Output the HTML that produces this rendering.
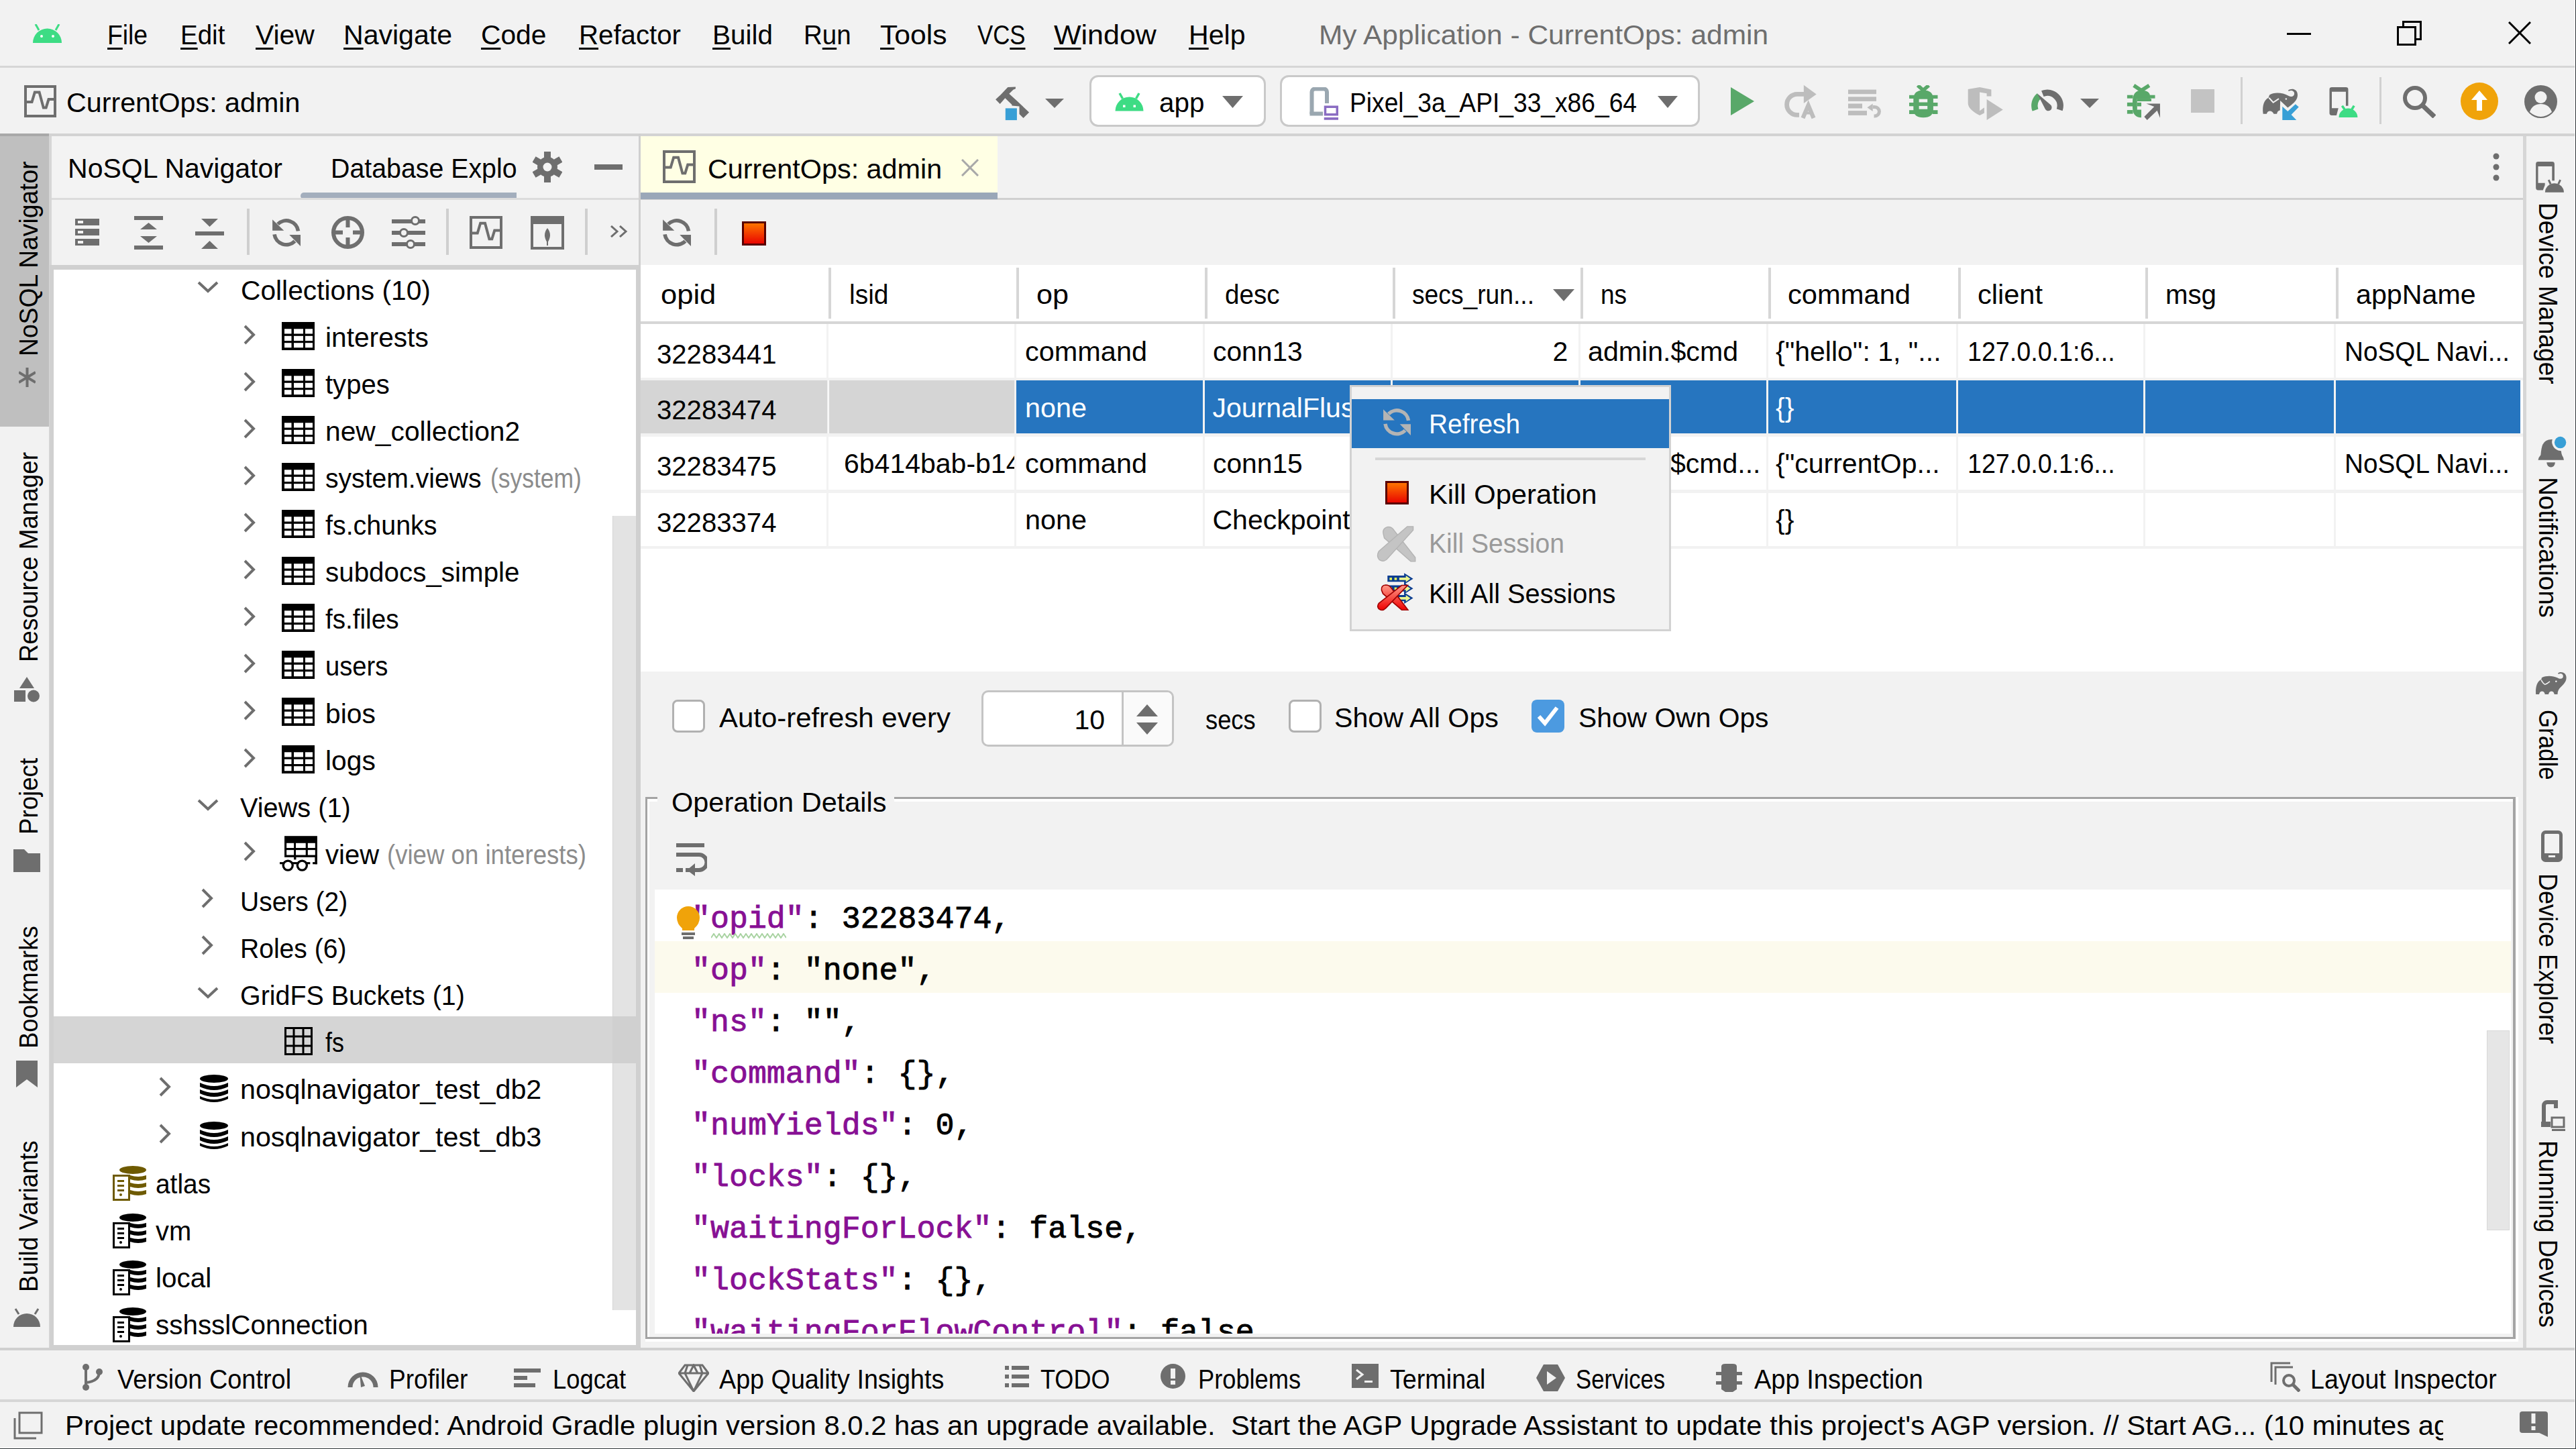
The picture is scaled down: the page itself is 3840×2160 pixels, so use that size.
<!DOCTYPE html><html><head><meta charset="utf-8"><style>
html,body{margin:0;padding:0;width:3840px;height:2160px;overflow:hidden;background:#f2f2f2;}
body>div,body>svg{position:absolute;}
div{position:absolute;box-sizing:border-box;}
.t{white-space:pre;}
.s{font-family:'Liberation Sans', sans-serif;}
.m{font-family:'Liberation Mono', monospace;-webkit-text-stroke:0.9px currentColor;}
</style></head><body>
<div style="left:0px;top:0px;width:3840px;height:98px;background:#f2f2f2;"></div>
<div style="left:0px;top:98px;width:3840px;height:3px;background:#d6d6d6;"></div>
<svg style="position:absolute;left:49px;top:36px;" width="43" height="28" viewBox="0 0 43 28"><path d="M0 28 A21.5 21.5 0 0 1 43 28 Z" fill="#3ddc84"/><line x1="9" y1="9" x2="4" y2="0" stroke="#3ddc84" stroke-width="3"/><line x1="34" y1="9" x2="39" y2="0" stroke="#3ddc84" stroke-width="3"/><circle cx="13" cy="18" r="2" fill="#fff"/><circle cx="30" cy="18" r="2" fill="#fff"/></svg>
<div class="t s" style="left:160.0px;top:32.1px;font-size:41px;line-height:41px;color:#000;transform:scaleX(0.9090);transform-origin:0 0;"><span style="text-decoration:underline;text-decoration-thickness:3px;text-underline-offset:5px">F</span>ile</div>
<div class="t s" style="left:269.0px;top:32.1px;font-size:41px;line-height:41px;color:#000;transform:scaleX(0.9388);transform-origin:0 0;"><span style="text-decoration:underline;text-decoration-thickness:3px;text-underline-offset:5px">E</span>dit</div>
<div class="t s" style="left:381.0px;top:32.1px;font-size:41px;line-height:41px;color:#000;transform:scaleX(0.9972);transform-origin:0 0;"><span style="text-decoration:underline;text-decoration-thickness:3px;text-underline-offset:5px">V</span>iew</div>
<div class="t s" style="left:512.0px;top:32.1px;font-size:41px;line-height:41px;color:#000;transform:scaleX(1.0010);transform-origin:0 0;"><span style="text-decoration:underline;text-decoration-thickness:3px;text-underline-offset:5px">N</span>avigate</div>
<div class="t s" style="left:717.0px;top:32.1px;font-size:41px;line-height:41px;color:#000;transform:scaleX(0.9940);transform-origin:0 0;"><span style="text-decoration:underline;text-decoration-thickness:3px;text-underline-offset:5px">C</span>ode</div>
<div class="t s" style="left:863.0px;top:32.1px;font-size:41px;line-height:41px;color:#000;transform:scaleX(0.9808);transform-origin:0 0;"><span style="text-decoration:underline;text-decoration-thickness:3px;text-underline-offset:5px">R</span>efactor</div>
<div class="t s" style="left:1062.0px;top:32.1px;font-size:41px;line-height:41px;color:#000;transform:scaleX(0.9866);transform-origin:0 0;"><span style="text-decoration:underline;text-decoration-thickness:3px;text-underline-offset:5px">B</span>uild</div>
<div class="t s" style="left:1198.0px;top:32.1px;font-size:41px;line-height:41px;color:#000;transform:scaleX(0.9384);transform-origin:0 0;">R<span style="text-decoration:underline;text-decoration-thickness:3px;text-underline-offset:5px">u</span>n</div>
<div class="t s" style="left:1312.0px;top:32.1px;font-size:41px;line-height:41px;color:#000;transform:scaleX(1.0414);transform-origin:0 0;"><span style="text-decoration:underline;text-decoration-thickness:3px;text-underline-offset:5px">T</span>ools</div>
<div class="t s" style="left:1457.0px;top:32.1px;font-size:41px;line-height:41px;color:#000;transform:scaleX(0.8474);transform-origin:0 0;">VC<span style="text-decoration:underline;text-decoration-thickness:3px;text-underline-offset:5px">S</span></div>
<div class="t s" style="left:1571.0px;top:32.1px;font-size:41px;line-height:41px;color:#000;transform:scaleX(1.0482);transform-origin:0 0;"><span style="text-decoration:underline;text-decoration-thickness:3px;text-underline-offset:5px">W</span>indow</div>
<div class="t s" style="left:1772.0px;top:32.1px;font-size:41px;line-height:41px;color:#000;transform:scaleX(1.0017);transform-origin:0 0;"><span style="text-decoration:underline;text-decoration-thickness:3px;text-underline-offset:5px">H</span>elp</div>
<div class="t s" style="left:1965.5px;top:32.1px;font-size:41px;line-height:41px;color:#6e6e6e;transform:scaleX(1.0354);transform-origin:0 0;">My Application - CurrentOps: admin</div>
<div style="left:3409px;top:49px;width:36px;height:3px;background:#000;"></div>
<svg style="position:absolute;left:3573px;top:31px;" width="37" height="37" viewBox="0 0 37 37"><rect x="1.5" y="9.5" width="26" height="26" fill="none" stroke="#000" stroke-width="3"/><path d="M9.5 9.5 V1.5 H35.5 V27.5 H27.5" fill="none" stroke="#000" stroke-width="3"/></svg>
<svg style="position:absolute;left:3739px;top:32px;" width="34" height="34" viewBox="0 0 34 34"><path d="M1 1 L33 33 M33 1 L1 33" stroke="#000" stroke-width="3"/></svg>
<div style="left:0px;top:199px;width:3840px;height:4px;background:#d3d3d3;"></div>
<svg style="position:absolute;left:36px;top:127px;" width="48" height="48" viewBox="0 0 48 48"><rect x="2" y="2" width="44" height="44" fill="none" stroke="#6e6e6e" stroke-width="4"/><path d="M4 24.96 H11.52 L15.84 10.56 H22.56 L28.799999999999997 33.599999999999994 H32.64 L36.480000000000004 21.12 H44" fill="none" stroke="#6e6e6e" stroke-width="4"/></svg>
<div class="t s" style="left:99.0px;top:133.2px;font-size:41px;line-height:41px;color:#000;transform:scaleX(1.0059);transform-origin:0 0;">CurrentOps: admin</div>
<svg style="position:absolute;left:1483px;top:128px;" width="52" height="52" viewBox="0 0 52 52"><path d="M1.1 20.3 L8.7 13.2 L19.3 2.1 L30.9 1.6 L30.9 4.2 L27.4 5.7 L21.3 11.7 L33.4 22.8 L51.1 39.5 L42.5 48.1 L36.5 42 L36.5 30.4 L25.4 29.4 L25.4 27.9 L15.3 18.3 L7.7 26.9 Z" fill="#6e6e6e"/><rect x="14.3" y="31.9" width="20.1" height="20.7" fill="#f2f2f2"/><rect x="15.8" y="33.4" width="17.1" height="17.7" fill="#389fd6"/></svg>
<svg style="position:absolute;left:1558px;top:147px;" width="28" height="14" viewBox="0 0 28 14"><path d="M0 0 H28 L14 14 Z" fill="#6e6e6e"/></svg>
<div style="left:1624px;top:112px;width:263px;height:77px;background:#fff;border:3px solid #c9c9c9;border-radius:13px"></div>
<svg style="position:absolute;left:1662px;top:137px;" width="43" height="29" viewBox="0 0 43 29"><path d="M0.5 28.5 A21 21 0 0 1 42.5 28.5 Z" fill="#3ddc84"/><line x1="11.5" y1="10" x2="7" y2="2" stroke="#3ddc84" stroke-width="3.5"/><line x1="31.5" y1="10" x2="36" y2="2" stroke="#3ddc84" stroke-width="3.5"/><rect x="12" y="19.5" width="3.5" height="3.5" fill="#fff"/><rect x="27.5" y="19.5" width="3.5" height="3.5" fill="#fff"/></svg>
<div class="t s" style="left:1727.5px;top:132.7px;font-size:41px;line-height:41px;color:#000;transform:scaleX(0.9858);transform-origin:0 0;">app</div>
<svg style="position:absolute;left:1822px;top:143px;" width="31" height="18" viewBox="0 0 31 18"><path d="M0 0 H31 L15.5 18 Z" fill="#6e6e6e"/></svg>
<div style="left:1908px;top:112px;width:626px;height:77px;background:#fff;border:3px solid #c9c9c9;border-radius:13px"></div>
<svg style="position:absolute;left:1952px;top:130px;" width="44" height="49" viewBox="0 0 44 49"><path d="M3.5 40 V7 a4.5 4.5 0 0 1 4.5 -4.5 H21.5 a4.5 4.5 0 0 1 4.5 4.5 V24" fill="none" stroke="#9aa7b0" stroke-width="6"/><rect x="0.5" y="36.5" width="19.5" height="6" fill="#9aa7b0"/><rect x="23.5" y="29.25" width="17.75" height="11.5" fill="none" stroke="#8a6cc2" stroke-width="3.5"/><rect x="21.75" y="45" width="21.25" height="3.75" fill="#8a6cc2"/></svg>
<div class="t s" style="left:2012.0px;top:132.7px;font-size:41px;line-height:41px;color:#000;transform:scaleX(0.9070);transform-origin:0 0;">Pixel_3a_API_33_x86_64</div>
<svg style="position:absolute;left:2471px;top:143px;" width="30" height="18" viewBox="0 0 30 18"><path d="M0 0 H30 L15 18 Z" fill="#6e6e6e"/></svg>
<svg style="position:absolute;left:2580px;top:130px;" width="35" height="42" viewBox="0 0 35 42"><path d="M0 0 L35 21 L0 42 Z" fill="#59a869"/></svg>
<svg style="position:absolute;left:2658px;top:125px;" width="52" height="53" viewBox="0 0 52 53"><path d="M31 15.4 H21.1 A15.5 15.5 0 0 0 21.1 46.4 H24" fill="none" stroke="#bdbdbd" stroke-width="6.8"/><path d="M30.8 1.8 L49.7 15.4 L30.8 29 Z" fill="#bdbdbd"/><path d="M29.5 51 L37.6 32 L45.5 51" fill="none" stroke="#bdbdbd" stroke-width="6.2" stroke-linejoin="miter"/><rect x="33" y="41.5" width="9" height="4" fill="#bdbdbd"/></svg>
<svg style="position:absolute;left:2755px;top:133px;" width="50" height="44" viewBox="0 0 50 44"><rect x="0" y="0.6" width="42" height="6.6" fill="#bdbdbd"/><rect x="0" y="11.3" width="42" height="6.6" fill="#bdbdbd"/><rect x="0" y="21.5" width="21" height="7" fill="#bdbdbd"/><rect x="0" y="32.1" width="28" height="6.8" fill="#bdbdbd"/><path d="M36.7 26.5 H39.6 A6.8 6.8 0 0 1 39.6 40.1 H38.5" fill="none" stroke="#bdbdbd" stroke-width="5"/><path d="M28.4 27.3 L36.7 21.5 V33.1 Z" fill="#bdbdbd"/></svg>
<svg style="position:absolute;left:2846px;top:127px;" width="43" height="49" viewBox="0 0 43 49"><path d="M12.7 0.3 L20.9 7.6 L29.2 0.3" fill="none" stroke="#59a869" stroke-width="5.5"/><path d="M6.3 21 Q6.3 7.6 21.1 7.6 Q35.9 7.6 35.9 21 V36 Q35.9 48.3 21.1 48.3 Q6.3 48.3 6.3 36 Z" fill="#59a869"/><rect x="0" y="14.8" width="8" height="5.2" fill="#59a869"/><rect x="0" y="26" width="8" height="5.3" fill="#59a869"/><rect x="0" y="37.2" width="8" height="5.8" fill="#59a869"/><rect x="34.5" y="14.8" width="8" height="5.2" fill="#59a869"/><rect x="34.5" y="26" width="8" height="5.3" fill="#59a869"/><rect x="34.5" y="37.2" width="8" height="5.8" fill="#59a869"/><rect x="14.6" y="20.7" width="12.6" height="4.8" fill="#f2f2f2"/><rect x="14.6" y="30.9" width="12.6" height="4.8" fill="#f2f2f2"/></svg>
<svg style="position:absolute;left:2933px;top:129px;" width="54" height="51" viewBox="0 0 54 51"><path d="M0.7 4 L18.1 0.9 L35.4 4.6 V14.6 H28.6 V10.2 L18.1 8.4 V36.3 L24.9 31.3 V39.4 L18.1 43.1 Q0.7 34 0.7 25 Z" fill="#bdbdbd"/><path d="M28.6 18.9 L52.8 34.4 L28.6 50 Z" fill="#bdbdbd"/></svg>
<svg style="position:absolute;left:3025px;top:131px;" width="54" height="36" viewBox="0 0 54 36"><path d="M8.96 33.07 A19.2 19.2 0 0 1 14.66 11.79" fill="none" stroke="#59a869" stroke-width="9.4"/><path d="M19.81 8.7 A19.2 19.2 0 0 1 45.15 32.75" fill="none" stroke="#6e6e6e" stroke-width="9.4"/><rect x="0" y="34.7" width="54" height="2" fill="#f2f2f2"/><path d="M11.8 8.2 L31.5 25 A5.2 5.2 0 1 1 23.5 31 Z" fill="#6e6e6e"/></svg>
<svg style="position:absolute;left:3101px;top:147px;" width="28" height="14" viewBox="0 0 28 14"><path d="M0 0 H28 L14 14 Z" fill="#6e6e6e"/></svg>
<svg style="position:absolute;left:2920px;top:115px;" width="320" height="75" viewBox="0 0 2576 604"><g><path d="M2100 100 L2190 160 L2285 100" fill="none" stroke="#59a869" stroke-width="45"/><path d="M2085 300 Q2085 160 2190 160 Q2295 160 2295 230 L2295 258 L2140 258 L2140 390 L2190 390 L2190 485 Q2085 485 2085 360 Z" fill="#59a869"/><rect x="2020" y="215" width="70" height="40" fill="#59a869"/><rect x="2290" y="215" width="65" height="40" fill="#59a869"/><rect x="2020" y="305" width="70" height="45" fill="#59a869"/><rect x="2020" y="395" width="70" height="45" fill="#59a869"/><rect x="2140" y="258" width="170" height="32" fill="#59a869"/><rect x="2140" y="305" width="50" height="45" fill="#59a869"/><path d="M2225 475 L2345 355 L2250 318 L2415 318 L2415 490 L2380 400 L2260 515 Z" fill="#6e6e6e"/></g></svg>
<div style="left:3266px;top:133px;width:35px;height:35px;background:#c3c3c3;"></div>
<div style="left:3340px;top:115px;width:3px;height:70px;background:#d1d1d1;"></div>
<svg style="position:absolute;left:3360px;top:115px;" width="180" height="75" viewBox="0 0 2576 1073"><path d="M195 785 C170 600 220 480 310 440 L330 380 C420 320 600 320 740 400 C800 430 860 410 860 350 C860 290 790 270 740 300 L730 280 C790 230 930 240 930 380 C930 480 860 540 800 590 L720 650 L560 500 L555 710 C510 715 490 760 490 785 L420 785 C400 710 290 690 270 785 Z" fill="#6e6e6e"/><path d="M320 440 L410 540 L530 460" fill="none" stroke="#f2f2f2" stroke-width="28"/><circle cx="685" cy="465" r="18" fill="#f2f2f2"/><path d="M605 625 L720 730 L885 575 L955 635 L795 800 L905 915 L605 915 Z" fill="#389fd6"/><path d="M1610 260 Q1610 215 1660 215 H1960 Q2010 215 2010 260 V610 H1960 V310 H1660 V660 H1800 L1760 815 H1660 Q1610 815 1610 765 Z" fill="#6e6e6e"/><path d="M1810 860 A200 195 0 0 1 2210 860 Z" fill="#3ddc84"/><path d="M1880 610 L1935 690 M2135 610 L2085 690" stroke="#3ddc84" stroke-width="50"/></svg>
<div style="left:3547px;top:115px;width:3px;height:70px;background:#d1d1d1;"></div>
<svg style="position:absolute;left:3581px;top:127px;" width="50" height="49" viewBox="0 0 50 49"><circle cx="19" cy="19" r="15" fill="none" stroke="#6e6e6e" stroke-width="6"/><path d="M30 30 L48 47" stroke="#6e6e6e" stroke-width="7"/></svg>
<svg style="position:absolute;left:3668px;top:123px;" width="56" height="56" viewBox="0 0 56 56"><circle cx="28" cy="28" r="28" fill="#f0a30a"/><path d="M28 12 L40 26 H32 V42 H24 V26 H16 Z" fill="#fff"/></svg>
<svg style="position:absolute;left:3763px;top:127px;" width="49" height="49" viewBox="0 0 49 49"><circle cx="24.5" cy="24.5" r="24.5" fill="#6e6e6e"/><circle cx="24.5" cy="18" r="9" fill="#f2f2f2"/><path d="M8 40 Q12 28 24.5 28 Q37 28 41 40 Q33 47 24.5 47 Q16 47 8 40 Z" fill="#f2f2f2"/></svg>
<div style="left:0px;top:203px;width:73px;height:1808px;background:#f2f2f2;"></div>
<div style="left:0px;top:199px;width:73px;height:437px;background:#bfbfbf;"></div>
<div style="left:0px;top:199px;width:73px;height:4px;background:#a9a9a9;"></div>
<div style="left:73px;top:203px;width:4px;height:1808px;background:#d6d6d6;"></div>
<div class="t s" style="left:23.6px;top:530.6px;font-size:38px;line-height:38px;color:#000;transform-origin:0 0;transform:rotate(-90deg) scaleX(0.9804)">NoSQL Navigator</div>
<svg style="position:absolute;left:28px;top:544px;" width="25" height="37" viewBox="0 0 25 37"><path d="M12.5 4 V33 M0 11 L25 26 M25 11 L0 26" stroke="#6e6e6e" stroke-width="4"/></svg>
<div class="t s" style="left:23.6px;top:987.0px;font-size:38px;line-height:38px;color:#000;transform-origin:0 0;transform:rotate(-90deg) scaleX(0.9685)">Resource Manager</div>
<svg style="position:absolute;left:20px;top:1009px;" width="40" height="38" viewBox="0 0 40 38"><path d="M20 0 L31 17 H9 Z" fill="#6e6e6e"/><rect x="1" y="20" width="17" height="17" fill="#6e6e6e"/><circle cx="30" cy="28.5" r="9" fill="#6e6e6e"/></svg>
<div class="t s" style="left:23.6px;top:1244.0px;font-size:38px;line-height:38px;color:#000;transform-origin:0 0;transform:rotate(-90deg) scaleX(0.9646)">Project</div>
<svg style="position:absolute;left:20px;top:1266px;" width="40" height="34" viewBox="0 0 40 34"><path d="M0 0 H16 L22 6 H40 V34 H0 Z" fill="#6e6e6e"/></svg>
<div class="t s" style="left:23.6px;top:1562.7px;font-size:38px;line-height:38px;color:#000;transform-origin:0 0;transform:rotate(-90deg) scaleX(0.9616)">Bookmarks</div>
<svg style="position:absolute;left:24px;top:1581px;" width="32" height="40" viewBox="0 0 32 40"><path d="M0 0 H32 V40 L16 28 L0 40 Z" fill="#6e6e6e"/></svg>
<div class="t s" style="left:23.6px;top:1925.6px;font-size:38px;line-height:38px;color:#000;transform-origin:0 0;transform:rotate(-90deg) scaleX(0.9741)">Build Variants</div>
<svg style="position:absolute;left:20px;top:1950px;" width="40" height="28" viewBox="0 0 40 28"><path d="M0 28 A20 20 0 0 1 40 28 Z" fill="#6e6e6e"/><line x1="8" y1="9" x2="3" y2="1" stroke="#6e6e6e" stroke-width="3"/><line x1="32" y1="9" x2="37" y2="1" stroke="#6e6e6e" stroke-width="3"/></svg>
<div style="left:77px;top:203px;width:878px;height:92px;background:#f3f3f3;"></div>
<div class="t s" style="left:101.0px;top:231.2px;font-size:41px;line-height:41px;color:#000;transform:scaleX(1.0006);transform-origin:0 0;">NoSQL Navigator</div>
<div class="t s" style="left:492.5px;top:231.2px;font-size:41px;line-height:41px;color:#000;transform:scaleX(0.9587);transform-origin:0 0;">Database Explo</div>
<div style="left:448px;top:287px;width:322px;height:10px;background:#a3aebd;border-radius:5px 0 0 5px"></div>
<div style="left:77px;top:295px;width:878px;height:3px;background:#dcdcdc;"></div>
<svg style="position:absolute;left:794px;top:226px;" width="44" height="46" viewBox="0 0 44 46"><g transform="translate(22,23)"><circle r="15" fill="#6e6e6e"/><g fill="#6e6e6e"><rect x="-5" y="-23" width="10" height="10" transform="rotate(0)"/><rect x="-5" y="-23" width="10" height="10" transform="rotate(60)"/><rect x="-5" y="-23" width="10" height="10" transform="rotate(120)"/><rect x="-5" y="-23" width="10" height="10" transform="rotate(180)"/><rect x="-5" y="-23" width="10" height="10" transform="rotate(240)"/><rect x="-5" y="-23" width="10" height="10" transform="rotate(300)"/></g><circle r="6.5" fill="#f3f3f3"/></g></svg>
<div style="left:886px;top:245px;width:42px;height:8px;background:#6e6e6e;"></div>
<div style="left:77px;top:298px;width:878px;height:97px;background:#f2f2f2;"></div>
<svg style="position:absolute;left:112px;top:326px;" width="36" height="41" viewBox="0 0 36 41"><rect x="0" y="0" width="36" height="10" fill="#6e6e6e"/><rect x="0" y="15" width="36" height="10" fill="#6e6e6e"/><rect x="0" y="30" width="36" height="10" fill="#6e6e6e"/><rect x="4" y="3" width="8" height="4" fill="#f2f2f2"/><rect x="4" y="18" width="8" height="4" fill="#f2f2f2"/><rect x="4" y="33" width="8" height="4" fill="#f2f2f2"/></svg>
<svg style="position:absolute;left:200px;top:322px;" width="43" height="50" viewBox="0 0 43 50"><rect x="0" y="0" width="43" height="6" fill="#6e6e6e"/><rect x="0" y="44" width="43" height="6" fill="#6e6e6e"/><path d="M9 20 L21.5 10 L34 20 Z M9 30 L21.5 40 L34 30 Z" fill="#6e6e6e"/></svg>
<svg style="position:absolute;left:291px;top:326px;" width="43" height="45" viewBox="0 0 43 45"><rect x="0" y="19" width="43" height="6" fill="#6e6e6e"/><path d="M9 0 H34 L21.5 12 Z M9 45 H34 L21.5 33 Z" fill="#6e6e6e"/></svg>
<div style="left:368px;top:311px;width:4px;height:69px;background:#cfcfcf;"></div>
<svg style="position:absolute;left:405px;top:326px;" width="43" height="43" viewBox="0 0 43 43"><g transform="scale(1.0)"><path d="M9.14 8.14 A17.9 17.9 0 0 1 39.5 18.3" fill="none" stroke="#6e6e6e" stroke-width="5.6"/><path d="M4.07 23.3 A17.9 17.9 0 0 0 34.46 33.46" fill="none" stroke="#6e6e6e" stroke-width="5.6"/><path d="M1.1 1.2 V17.8 H18.3 Z" fill="#6e6e6e"/><path d="M43 23.9 V41 L26.3 23.9 Z" fill="#6e6e6e"/></g></svg>
<svg style="position:absolute;left:494px;top:322px;" width="49" height="49" viewBox="0 0 49 49"><circle cx="24.5" cy="24.5" r="21.5" fill="none" stroke="#6e6e6e" stroke-width="6"/><path d="M24.5 3 V17 M24.5 32 V46 M3 24.5 H17 M32 24.5 H46" stroke="#6e6e6e" stroke-width="6"/></svg>
<svg style="position:absolute;left:584px;top:322px;" width="50" height="50" viewBox="0 0 50 50"><rect x="0" y="5" width="50" height="6" fill="#6e6e6e"/><rect x="0" y="22" width="50" height="6" fill="#6e6e6e"/><rect x="0" y="39" width="50" height="6" fill="#6e6e6e"/><circle cx="35" cy="7" r="5.5" fill="#f2f2f2" stroke="#6e6e6e" stroke-width="3"/><circle cx="18" cy="25" r="5.5" fill="#f2f2f2" stroke="#6e6e6e" stroke-width="3"/><circle cx="28" cy="42" r="5.5" fill="#f2f2f2" stroke="#6e6e6e" stroke-width="3"/></svg>
<div style="left:665px;top:311px;width:4px;height:69px;background:#cfcfcf;"></div>
<svg style="position:absolute;left:700px;top:322px;" width="49" height="49" viewBox="0 0 49 49"><rect x="2" y="2" width="45" height="45" fill="none" stroke="#6e6e6e" stroke-width="4"/><path d="M4 25.48 H11.76 L16.17 10.78 H23.029999999999998 L29.4 34.3 H33.32 L37.24 21.56 H45" fill="none" stroke="#6e6e6e" stroke-width="4"/></svg>
<svg style="position:absolute;left:791px;top:322px;" width="50" height="50" viewBox="0 0 50 50"><rect x="2" y="2" width="46" height="46" fill="none" stroke="#6e6e6e" stroke-width="4"/><rect x="2" y="2" width="46" height="10" fill="#6e6e6e"/><path d="M25 18 Q33 28 25 40 Q17 28 25 18 Z" fill="#6e6e6e"/><line x1="25" y1="38" x2="25" y2="44" stroke="#6e6e6e" stroke-width="2"/></svg>
<div style="left:872px;top:311px;width:4px;height:69px;background:#cfcfcf;"></div>
<svg style="position:absolute;left:910px;top:336px;" width="26" height="18" viewBox="0 0 26 18"><path d="M1 1 L10 9 L1 17 M14 1 L23 9 L14 17" fill="none" stroke="#6e6e6e" stroke-width="3"/></svg>
<div style="left:952px;top:199px;width:3px;height:196px;background:#d0d0d0;"></div>
<div style="left:77px;top:395px;width:878px;height:7px;background:#d0d0d0;"></div>
<div style="left:80px;top:402px;width:868px;height:1609px;background:#ffffff;"></div>
<div style="left:948px;top:395px;width:7px;height:1616px;background:#d0d0d0;"></div>
<div style="left:74px;top:395px;width:6px;height:1610px;background:#d0d0d0;"></div>
<div style="left:913px;top:769px;width:35px;height:1184px;background:#e3e3e3;border-left:1px solid #d4d4d4"></div>
<svg style="position:absolute;left:294px;top:419px;" width="32" height="18" viewBox="0 0 32 18"><path d="M2 2 L16 15 L30 2" fill="none" stroke="#6e6e6e" stroke-width="4"/></svg>
<div class="t s" style="left:358.8px;top:412.6px;font-size:41px;line-height:41px;color:#000;transform:scaleX(0.9933);transform-origin:0 0;">Collections (10)</div>
<svg style="position:absolute;left:363px;top:483.6px;" width="18" height="30" viewBox="0 0 18 30"><path d="M2 2 L15 15 L2 28" fill="none" stroke="#6e6e6e" stroke-width="4"/></svg>
<svg style="position:absolute;left:420px;top:479.6px;" width="49" height="42" viewBox="0 0 49 42"><g transform="scale(1.000,1.000)"><rect x="0" y="0" width="49" height="42" fill="#000"/><rect x="4" y="10.3" width="10.5" height="7.199999999999999" fill="#fff"/><rect x="4" y="20.8" width="10.5" height="7.199999999999999" fill="#fff"/><rect x="4" y="31.2" width="10.5" height="7.0000000000000036" fill="#fff"/><rect x="18" y="10.3" width="14" height="7.199999999999999" fill="#fff"/><rect x="18" y="20.8" width="14" height="7.199999999999999" fill="#fff"/><rect x="18" y="31.2" width="14" height="7.0000000000000036" fill="#fff"/><rect x="35" y="10.3" width="11" height="7.199999999999999" fill="#fff"/><rect x="35" y="20.8" width="11" height="7.199999999999999" fill="#fff"/><rect x="35" y="31.2" width="11" height="7.0000000000000036" fill="#fff"/></g></svg>
<div class="t s" style="left:485.0px;top:482.8px;font-size:41px;line-height:41px;color:#000;transform:scaleX(0.9921);transform-origin:0 0;">interests</div>
<svg style="position:absolute;left:363px;top:553.7px;" width="18" height="30" viewBox="0 0 18 30"><path d="M2 2 L15 15 L2 28" fill="none" stroke="#6e6e6e" stroke-width="4"/></svg>
<svg style="position:absolute;left:420px;top:549.7px;" width="49" height="42" viewBox="0 0 49 42"><g transform="scale(1.000,1.000)"><rect x="0" y="0" width="49" height="42" fill="#000"/><rect x="4" y="10.3" width="10.5" height="7.199999999999999" fill="#fff"/><rect x="4" y="20.8" width="10.5" height="7.199999999999999" fill="#fff"/><rect x="4" y="31.2" width="10.5" height="7.0000000000000036" fill="#fff"/><rect x="18" y="10.3" width="14" height="7.199999999999999" fill="#fff"/><rect x="18" y="20.8" width="14" height="7.199999999999999" fill="#fff"/><rect x="18" y="31.2" width="14" height="7.0000000000000036" fill="#fff"/><rect x="35" y="10.3" width="11" height="7.199999999999999" fill="#fff"/><rect x="35" y="20.8" width="11" height="7.199999999999999" fill="#fff"/><rect x="35" y="31.2" width="11" height="7.0000000000000036" fill="#fff"/></g></svg>
<div class="t s" style="left:485.0px;top:552.9px;font-size:41px;line-height:41px;color:#000;transform:scaleX(0.9766);transform-origin:0 0;">types</div>
<svg style="position:absolute;left:363px;top:623.8px;" width="18" height="30" viewBox="0 0 18 30"><path d="M2 2 L15 15 L2 28" fill="none" stroke="#6e6e6e" stroke-width="4"/></svg>
<svg style="position:absolute;left:420px;top:619.8px;" width="49" height="42" viewBox="0 0 49 42"><g transform="scale(1.000,1.000)"><rect x="0" y="0" width="49" height="42" fill="#000"/><rect x="4" y="10.3" width="10.5" height="7.199999999999999" fill="#fff"/><rect x="4" y="20.8" width="10.5" height="7.199999999999999" fill="#fff"/><rect x="4" y="31.2" width="10.5" height="7.0000000000000036" fill="#fff"/><rect x="18" y="10.3" width="14" height="7.199999999999999" fill="#fff"/><rect x="18" y="20.8" width="14" height="7.199999999999999" fill="#fff"/><rect x="18" y="31.2" width="14" height="7.0000000000000036" fill="#fff"/><rect x="35" y="10.3" width="11" height="7.199999999999999" fill="#fff"/><rect x="35" y="20.8" width="11" height="7.199999999999999" fill="#fff"/><rect x="35" y="31.2" width="11" height="7.0000000000000036" fill="#fff"/></g></svg>
<div class="t s" style="left:485.0px;top:622.9px;font-size:41px;line-height:41px;color:#000;transform:scaleX(0.9948);transform-origin:0 0;">new_collection2</div>
<svg style="position:absolute;left:363px;top:693.9px;" width="18" height="30" viewBox="0 0 18 30"><path d="M2 2 L15 15 L2 28" fill="none" stroke="#6e6e6e" stroke-width="4"/></svg>
<svg style="position:absolute;left:420px;top:689.9px;" width="49" height="42" viewBox="0 0 49 42"><g transform="scale(1.000,1.000)"><rect x="0" y="0" width="49" height="42" fill="#000"/><rect x="4" y="10.3" width="10.5" height="7.199999999999999" fill="#fff"/><rect x="4" y="20.8" width="10.5" height="7.199999999999999" fill="#fff"/><rect x="4" y="31.2" width="10.5" height="7.0000000000000036" fill="#fff"/><rect x="18" y="10.3" width="14" height="7.199999999999999" fill="#fff"/><rect x="18" y="20.8" width="14" height="7.199999999999999" fill="#fff"/><rect x="18" y="31.2" width="14" height="7.0000000000000036" fill="#fff"/><rect x="35" y="10.3" width="11" height="7.199999999999999" fill="#fff"/><rect x="35" y="20.8" width="11" height="7.199999999999999" fill="#fff"/><rect x="35" y="31.2" width="11" height="7.0000000000000036" fill="#fff"/></g></svg>
<div class="t s" style="left:485.0px;top:693.0px;font-size:41px;line-height:41px;color:#000;transform:scaleX(0.9539);transform-origin:0 0;">system.views</div>
<div class="t s" style="left:730.5px;top:693.0px;font-size:41px;line-height:41px;color:#8c8c8c;transform:scaleX(0.8649);transform-origin:0 0;">(system)</div>
<svg style="position:absolute;left:363px;top:764.0px;" width="18" height="30" viewBox="0 0 18 30"><path d="M2 2 L15 15 L2 28" fill="none" stroke="#6e6e6e" stroke-width="4"/></svg>
<svg style="position:absolute;left:420px;top:760.0px;" width="49" height="42" viewBox="0 0 49 42"><g transform="scale(1.000,1.000)"><rect x="0" y="0" width="49" height="42" fill="#000"/><rect x="4" y="10.3" width="10.5" height="7.199999999999999" fill="#fff"/><rect x="4" y="20.8" width="10.5" height="7.199999999999999" fill="#fff"/><rect x="4" y="31.2" width="10.5" height="7.0000000000000036" fill="#fff"/><rect x="18" y="10.3" width="14" height="7.199999999999999" fill="#fff"/><rect x="18" y="20.8" width="14" height="7.199999999999999" fill="#fff"/><rect x="18" y="31.2" width="14" height="7.0000000000000036" fill="#fff"/><rect x="35" y="10.3" width="11" height="7.199999999999999" fill="#fff"/><rect x="35" y="20.8" width="11" height="7.199999999999999" fill="#fff"/><rect x="35" y="31.2" width="11" height="7.0000000000000036" fill="#fff"/></g></svg>
<div class="t s" style="left:485.0px;top:763.1px;font-size:41px;line-height:41px;color:#000;transform:scaleX(0.9612);transform-origin:0 0;">fs.chunks</div>
<svg style="position:absolute;left:363px;top:834.0999999999999px;" width="18" height="30" viewBox="0 0 18 30"><path d="M2 2 L15 15 L2 28" fill="none" stroke="#6e6e6e" stroke-width="4"/></svg>
<svg style="position:absolute;left:420px;top:830.0999999999999px;" width="49" height="42" viewBox="0 0 49 42"><g transform="scale(1.000,1.000)"><rect x="0" y="0" width="49" height="42" fill="#000"/><rect x="4" y="10.3" width="10.5" height="7.199999999999999" fill="#fff"/><rect x="4" y="20.8" width="10.5" height="7.199999999999999" fill="#fff"/><rect x="4" y="31.2" width="10.5" height="7.0000000000000036" fill="#fff"/><rect x="18" y="10.3" width="14" height="7.199999999999999" fill="#fff"/><rect x="18" y="20.8" width="14" height="7.199999999999999" fill="#fff"/><rect x="18" y="31.2" width="14" height="7.0000000000000036" fill="#fff"/><rect x="35" y="10.3" width="11" height="7.199999999999999" fill="#fff"/><rect x="35" y="20.8" width="11" height="7.199999999999999" fill="#fff"/><rect x="35" y="31.2" width="11" height="7.0000000000000036" fill="#fff"/></g></svg>
<div class="t s" style="left:485.0px;top:833.2px;font-size:41px;line-height:41px;color:#000;transform:scaleX(0.9848);transform-origin:0 0;">subdocs_simple</div>
<svg style="position:absolute;left:363px;top:904.1999999999999px;" width="18" height="30" viewBox="0 0 18 30"><path d="M2 2 L15 15 L2 28" fill="none" stroke="#6e6e6e" stroke-width="4"/></svg>
<svg style="position:absolute;left:420px;top:900.1999999999999px;" width="49" height="42" viewBox="0 0 49 42"><g transform="scale(1.000,1.000)"><rect x="0" y="0" width="49" height="42" fill="#000"/><rect x="4" y="10.3" width="10.5" height="7.199999999999999" fill="#fff"/><rect x="4" y="20.8" width="10.5" height="7.199999999999999" fill="#fff"/><rect x="4" y="31.2" width="10.5" height="7.0000000000000036" fill="#fff"/><rect x="18" y="10.3" width="14" height="7.199999999999999" fill="#fff"/><rect x="18" y="20.8" width="14" height="7.199999999999999" fill="#fff"/><rect x="18" y="31.2" width="14" height="7.0000000000000036" fill="#fff"/><rect x="35" y="10.3" width="11" height="7.199999999999999" fill="#fff"/><rect x="35" y="20.8" width="11" height="7.199999999999999" fill="#fff"/><rect x="35" y="31.2" width="11" height="7.0000000000000036" fill="#fff"/></g></svg>
<div class="t s" style="left:485.0px;top:903.3px;font-size:41px;line-height:41px;color:#000;transform:scaleX(0.9421);transform-origin:0 0;">fs.files</div>
<svg style="position:absolute;left:363px;top:974.3px;" width="18" height="30" viewBox="0 0 18 30"><path d="M2 2 L15 15 L2 28" fill="none" stroke="#6e6e6e" stroke-width="4"/></svg>
<svg style="position:absolute;left:420px;top:970.3px;" width="49" height="42" viewBox="0 0 49 42"><g transform="scale(1.000,1.000)"><rect x="0" y="0" width="49" height="42" fill="#000"/><rect x="4" y="10.3" width="10.5" height="7.199999999999999" fill="#fff"/><rect x="4" y="20.8" width="10.5" height="7.199999999999999" fill="#fff"/><rect x="4" y="31.2" width="10.5" height="7.0000000000000036" fill="#fff"/><rect x="18" y="10.3" width="14" height="7.199999999999999" fill="#fff"/><rect x="18" y="20.8" width="14" height="7.199999999999999" fill="#fff"/><rect x="18" y="31.2" width="14" height="7.0000000000000036" fill="#fff"/><rect x="35" y="10.3" width="11" height="7.199999999999999" fill="#fff"/><rect x="35" y="20.8" width="11" height="7.199999999999999" fill="#fff"/><rect x="35" y="31.2" width="11" height="7.0000000000000036" fill="#fff"/></g></svg>
<div class="t s" style="left:485.0px;top:973.4px;font-size:41px;line-height:41px;color:#000;transform:scaleX(0.9317);transform-origin:0 0;">users</div>
<svg style="position:absolute;left:363px;top:1044.4px;" width="18" height="30" viewBox="0 0 18 30"><path d="M2 2 L15 15 L2 28" fill="none" stroke="#6e6e6e" stroke-width="4"/></svg>
<svg style="position:absolute;left:420px;top:1040.4px;" width="49" height="42" viewBox="0 0 49 42"><g transform="scale(1.000,1.000)"><rect x="0" y="0" width="49" height="42" fill="#000"/><rect x="4" y="10.3" width="10.5" height="7.199999999999999" fill="#fff"/><rect x="4" y="20.8" width="10.5" height="7.199999999999999" fill="#fff"/><rect x="4" y="31.2" width="10.5" height="7.0000000000000036" fill="#fff"/><rect x="18" y="10.3" width="14" height="7.199999999999999" fill="#fff"/><rect x="18" y="20.8" width="14" height="7.199999999999999" fill="#fff"/><rect x="18" y="31.2" width="14" height="7.0000000000000036" fill="#fff"/><rect x="35" y="10.3" width="11" height="7.199999999999999" fill="#fff"/><rect x="35" y="20.8" width="11" height="7.199999999999999" fill="#fff"/><rect x="35" y="31.2" width="11" height="7.0000000000000036" fill="#fff"/></g></svg>
<div class="t s" style="left:485.0px;top:1043.6px;font-size:41px;line-height:41px;color:#000;transform:scaleX(0.9942);transform-origin:0 0;">bios</div>
<svg style="position:absolute;left:363px;top:1114.5px;" width="18" height="30" viewBox="0 0 18 30"><path d="M2 2 L15 15 L2 28" fill="none" stroke="#6e6e6e" stroke-width="4"/></svg>
<svg style="position:absolute;left:420px;top:1110.5px;" width="49" height="42" viewBox="0 0 49 42"><g transform="scale(1.000,1.000)"><rect x="0" y="0" width="49" height="42" fill="#000"/><rect x="4" y="10.3" width="10.5" height="7.199999999999999" fill="#fff"/><rect x="4" y="20.8" width="10.5" height="7.199999999999999" fill="#fff"/><rect x="4" y="31.2" width="10.5" height="7.0000000000000036" fill="#fff"/><rect x="18" y="10.3" width="14" height="7.199999999999999" fill="#fff"/><rect x="18" y="20.8" width="14" height="7.199999999999999" fill="#fff"/><rect x="18" y="31.2" width="14" height="7.0000000000000036" fill="#fff"/><rect x="35" y="10.3" width="11" height="7.199999999999999" fill="#fff"/><rect x="35" y="20.8" width="11" height="7.199999999999999" fill="#fff"/><rect x="35" y="31.2" width="11" height="7.0000000000000036" fill="#fff"/></g></svg>
<div class="t s" style="left:485.0px;top:1113.7px;font-size:41px;line-height:41px;color:#000;transform:scaleX(0.9942);transform-origin:0 0;">logs</div>
<svg style="position:absolute;left:294px;top:1190.6px;" width="32" height="18" viewBox="0 0 32 18"><path d="M2 2 L16 15 L30 2" fill="none" stroke="#6e6e6e" stroke-width="4"/></svg>
<div class="t s" style="left:357.8px;top:1183.8px;font-size:41px;line-height:41px;color:#000;transform:scaleX(0.9680);transform-origin:0 0;">Views (1)</div>
<svg style="position:absolute;left:363px;top:1254.1999999999998px;" width="18" height="30" viewBox="0 0 18 30"><path d="M2 2 L15 15 L2 28" fill="none" stroke="#6e6e6e" stroke-width="4"/></svg>
<svg style="position:absolute;left:405px;top:1240px;" width="80" height="60" viewBox="0 0 1932 1449"><rect x="460" y="150" width="1180" height="765" fill="#000"/><rect x="535" y="405" width="265" height="175" fill="#fff"/><rect x="535" y="655" width="265" height="180" fill="#fff"/><rect x="870" y="405" width="355" height="175" fill="#fff"/><rect x="870" y="655" width="355" height="180" fill="#fff"/><rect x="1300" y="405" width="265" height="175" fill="#fff"/><rect x="1300" y="655" width="265" height="180" fill="#fff"/><rect x="1555" y="900" width="85" height="265" fill="#000"/><rect x="1475" y="1090" width="165" height="75" fill="#000"/><rect x="290" y="1090" width="1095" height="75" fill="#000"/><rect x="800" y="900" width="80" height="100" fill="#000"/><circle cx="585" cy="1210" r="170" fill="#fff" stroke="#000" stroke-width="80"/><circle cx="1095" cy="1210" r="170" fill="#fff" stroke="#000" stroke-width="80"/></svg>
<div class="t s" style="left:484.5px;top:1253.8px;font-size:41px;line-height:41px;color:#000;transform:scaleX(0.9756);transform-origin:0 0;">view</div>
<div class="t s" style="left:577.0px;top:1253.8px;font-size:41px;line-height:41px;color:#8c8c8c;transform:scaleX(0.8927);transform-origin:0 0;">(view on interests)</div>
<svg style="position:absolute;left:300px;top:1324.3px;" width="18" height="30" viewBox="0 0 18 30"><path d="M2 2 L15 15 L2 28" fill="none" stroke="#6e6e6e" stroke-width="4"/></svg>
<div class="t s" style="left:357.8px;top:1324.0px;font-size:41px;line-height:41px;color:#000;transform:scaleX(0.9507);transform-origin:0 0;">Users (2)</div>
<svg style="position:absolute;left:300px;top:1394.3999999999999px;" width="18" height="30" viewBox="0 0 18 30"><path d="M2 2 L15 15 L2 28" fill="none" stroke="#6e6e6e" stroke-width="4"/></svg>
<div class="t s" style="left:357.8px;top:1394.0px;font-size:41px;line-height:41px;color:#000;transform:scaleX(0.9528);transform-origin:0 0;">Roles (6)</div>
<svg style="position:absolute;left:294px;top:1471.0px;" width="32" height="18" viewBox="0 0 32 18"><path d="M2 2 L16 15 L30 2" fill="none" stroke="#6e6e6e" stroke-width="4"/></svg>
<div class="t s" style="left:357.8px;top:1464.2px;font-size:41px;line-height:41px;color:#000;transform:scaleX(0.9604);transform-origin:0 0;">GridFS Buckets (1)</div>
<div style="left:80px;top:1515px;width:833px;height:70px;background:#d5d5d5;"></div>
<div style="left:913px;top:1515px;width:35px;height:70px;background:#d0d0d0;"></div>
<svg style="position:absolute;left:424px;top:1531px;" width="42" height="42" viewBox="0 0 42 42"><rect x="1.5" y="1.5" width="39" height="39" fill="none" stroke="#000" stroke-width="3"/><path d="M14 1 V41 M28 1 V41 M1 14 H41 M1 28 H41" stroke="#000" stroke-width="3"/></svg>
<div class="t s" style="left:484.5px;top:1534.2px;font-size:41px;line-height:41px;color:#000;transform:scaleX(0.8755);transform-origin:0 0;">fs</div>
<svg style="position:absolute;left:237px;top:1604.6999999999998px;" width="18" height="30" viewBox="0 0 18 30"><path d="M2 2 L15 15 L2 28" fill="none" stroke="#6e6e6e" stroke-width="4"/></svg>
<svg style="position:absolute;left:298px;top:1602.1999999999998px;" width="42" height="42" viewBox="0 0 42 42"><ellipse cx="21" cy="6" rx="21" ry="6" fill="#000"/><path d="M0 12 Q21 22 42 12 V18 Q21 28 0 18 Z" fill="#000"/><path d="M0 22 Q21 32 42 22 V28 Q21 38 0 28 Z" fill="#000"/><path d="M0 32 Q21 42 42 32 V36 Q21 46 0 36 Z" fill="#000"/></svg>
<div class="t s" style="left:357.8px;top:1604.3px;font-size:41px;line-height:41px;color:#000;transform:scaleX(1.0056);transform-origin:0 0;">nosqlnavigator_test_db2</div>
<svg style="position:absolute;left:237px;top:1674.8px;" width="18" height="30" viewBox="0 0 18 30"><path d="M2 2 L15 15 L2 28" fill="none" stroke="#6e6e6e" stroke-width="4"/></svg>
<svg style="position:absolute;left:298px;top:1672.3px;" width="42" height="42" viewBox="0 0 42 42"><ellipse cx="21" cy="6" rx="21" ry="6" fill="#000"/><path d="M0 12 Q21 22 42 12 V18 Q21 28 0 18 Z" fill="#000"/><path d="M0 22 Q21 32 42 22 V28 Q21 38 0 28 Z" fill="#000"/><path d="M0 32 Q21 42 42 32 V36 Q21 46 0 36 Z" fill="#000"/></svg>
<div class="t s" style="left:357.8px;top:1674.5px;font-size:41px;line-height:41px;color:#000;transform:scaleX(1.0056);transform-origin:0 0;">nosqlnavigator_test_db3</div>
<svg style="position:absolute;left:168px;top:1738.3999999999999px;" width="50" height="52" viewBox="0 0 50 52"><ellipse cx="30" cy="6" rx="20" ry="6" fill="#6e5a00"/><path d="M26 14 Q38 18 50 14 V20 Q38 24 26 20 Z M26 25 Q38 29 50 25 V31 Q38 35 26 31 Z M26 36 Q38 40 50 36 V42 Q38 46 26 42 Z" fill="#6e5a00"/><rect x="1.5" y="14.5" width="23" height="36" fill="#fff" stroke="#6e5a00" stroke-width="3"/><rect x="7" y="21" width="10" height="3" fill="#6e5a00"/><rect x="7" y="28" width="10" height="3" fill="#6e5a00"/><rect x="7" y="35" width="10" height="3" fill="#6e5a00"/><circle cx="12" cy="43" r="2" fill="#6e5a00"/></svg>
<div class="t s" style="left:231.8px;top:1744.5px;font-size:41px;line-height:41px;color:#000;transform:scaleX(0.9479);transform-origin:0 0;">atlas</div>
<svg style="position:absolute;left:168px;top:1808.5px;" width="50" height="52" viewBox="0 0 50 52"><ellipse cx="30" cy="6" rx="20" ry="6" fill="#000"/><path d="M26 14 Q38 18 50 14 V20 Q38 24 26 20 Z M26 25 Q38 29 50 25 V31 Q38 35 26 31 Z M26 36 Q38 40 50 36 V42 Q38 46 26 42 Z" fill="#000"/><rect x="1.5" y="14.5" width="23" height="36" fill="#fff" stroke="#000" stroke-width="3"/><rect x="7" y="21" width="10" height="3" fill="#000"/><rect x="7" y="28" width="10" height="3" fill="#000"/><rect x="7" y="35" width="10" height="3" fill="#000"/><circle cx="12" cy="43" r="2" fill="#000"/></svg>
<div class="t s" style="left:231.8px;top:1814.7px;font-size:41px;line-height:41px;color:#000;transform:scaleX(0.9738);transform-origin:0 0;">vm</div>
<svg style="position:absolute;left:168px;top:1878.6px;" width="50" height="52" viewBox="0 0 50 52"><ellipse cx="30" cy="6" rx="20" ry="6" fill="#000"/><path d="M26 14 Q38 18 50 14 V20 Q38 24 26 20 Z M26 25 Q38 29 50 25 V31 Q38 35 26 31 Z M26 36 Q38 40 50 36 V42 Q38 46 26 42 Z" fill="#000"/><rect x="1.5" y="14.5" width="23" height="36" fill="#fff" stroke="#000" stroke-width="3"/><rect x="7" y="21" width="10" height="3" fill="#000"/><rect x="7" y="28" width="10" height="3" fill="#000"/><rect x="7" y="35" width="10" height="3" fill="#000"/><circle cx="12" cy="43" r="2" fill="#000"/></svg>
<div class="t s" style="left:231.8px;top:1884.8px;font-size:41px;line-height:41px;color:#000;transform:scaleX(0.9875);transform-origin:0 0;">local</div>
<svg style="position:absolute;left:168px;top:1948.6999999999998px;" width="50" height="52" viewBox="0 0 50 52"><ellipse cx="30" cy="6" rx="20" ry="6" fill="#000"/><path d="M26 14 Q38 18 50 14 V20 Q38 24 26 20 Z M26 25 Q38 29 50 25 V31 Q38 35 26 31 Z M26 36 Q38 40 50 36 V42 Q38 46 26 42 Z" fill="#000"/><rect x="1.5" y="14.5" width="23" height="36" fill="#fff" stroke="#000" stroke-width="3"/><rect x="7" y="21" width="10" height="3" fill="#000"/><rect x="7" y="28" width="10" height="3" fill="#000"/><rect x="7" y="35" width="10" height="3" fill="#000"/><circle cx="12" cy="43" r="2" fill="#000"/></svg>
<div class="t s" style="left:231.8px;top:1954.8px;font-size:41px;line-height:41px;color:#000;transform:scaleX(0.9856);transform-origin:0 0;">sshsslConnection</div>
<div style="left:74px;top:2005px;width:881px;height:8px;background:#d0d0d0;"></div>
<div style="left:955px;top:203px;width:2806px;height:92px;background:#f2f2f2;"></div>
<div style="left:955px;top:203px;width:532px;height:84px;background:#ffffe4;"></div>
<div style="left:955px;top:287px;width:532px;height:10px;background:#9aa7b8;"></div>
<div style="left:955px;top:295px;width:2806px;height:3px;background:#d0d0d0;"></div>
<div style="left:955px;top:287px;width:532px;height:10px;background:#9aa7b8;"></div>
<svg style="position:absolute;left:988px;top:224px;" width="49" height="49" viewBox="0 0 49 49"><rect x="2" y="2" width="45" height="45" fill="none" stroke="#6e6e6e" stroke-width="4"/><path d="M4 25.48 H11.76 L16.17 10.78 H23.029999999999998 L29.4 34.3 H33.32 L37.24 21.56 H45" fill="none" stroke="#6e6e6e" stroke-width="4"/></svg>
<div class="t s" style="left:1055.0px;top:231.7px;font-size:41px;line-height:41px;color:#000;transform:scaleX(1.0082);transform-origin:0 0;">CurrentOps: admin</div>
<svg style="position:absolute;left:1433px;top:237px;" width="26" height="26" viewBox="0 0 26 26"><path d="M1 1 L25 25 M25 1 L1 25" stroke="#a8a8a8" stroke-width="3"/></svg>
<svg style="position:absolute;left:3712px;top:228px;" width="18" height="42" viewBox="0 0 18 42"><circle cx="9" cy="5" r="4.5" fill="#6e6e6e"/><circle cx="9" cy="21" r="4.5" fill="#6e6e6e"/><circle cx="9" cy="37" r="4.5" fill="#6e6e6e"/></svg>
<svg style="position:absolute;left:987px;top:326px;" width="43" height="43" viewBox="0 0 43 43"><g transform="scale(1.0)"><path d="M9.14 8.14 A17.9 17.9 0 0 1 39.5 18.3" fill="none" stroke="#6e6e6e" stroke-width="5.6"/><path d="M4.07 23.3 A17.9 17.9 0 0 0 34.46 33.46" fill="none" stroke="#6e6e6e" stroke-width="5.6"/><path d="M1.1 1.2 V17.8 H18.3 Z" fill="#6e6e6e"/><path d="M43 23.9 V41 L26.3 23.9 Z" fill="#6e6e6e"/></g></svg>
<div style="left:1065px;top:311px;width:4px;height:69px;background:#cfcfcf;"></div>
<svg style="position:absolute;left:1106px;top:330px;" width="36" height="36" viewBox="0 0 36 36"><defs><linearGradient id="rg1106" x1="0" y1="0" x2="0" y2="1"><stop offset="0" stop-color="#ff7a00"/><stop offset="1" stop-color="#e80000"/></linearGradient></defs><rect x="1.5" y="1.5" width="33" height="33" fill="url(#rg1106)" stroke="#5a0000" stroke-width="3"/></svg>
<div style="left:955px;top:395px;width:2806px;height:606px;background:#ffffff;"></div>
<div style="left:1235px;top:399px;width:4px;height:76px;background:#d6d6d6;"></div>
<div style="left:1515px;top:399px;width:4px;height:76px;background:#d6d6d6;"></div>
<div style="left:1796px;top:399px;width:4px;height:76px;background:#d6d6d6;"></div>
<div style="left:2076px;top:399px;width:4px;height:76px;background:#d6d6d6;"></div>
<div style="left:2356px;top:399px;width:4px;height:76px;background:#d6d6d6;"></div>
<div style="left:2636px;top:399px;width:4px;height:76px;background:#d6d6d6;"></div>
<div style="left:2919px;top:399px;width:4px;height:76px;background:#d6d6d6;"></div>
<div style="left:3198px;top:399px;width:4px;height:76px;background:#d6d6d6;"></div>
<div style="left:3482px;top:399px;width:4px;height:76px;background:#d6d6d6;"></div>
<div class="t s" style="left:985.0px;top:419.1px;font-size:41px;line-height:41px;color:#000;transform:scaleX(1.0621);transform-origin:0 0;">opid</div>
<div class="t s" style="left:1266.0px;top:419.1px;font-size:41px;line-height:41px;color:#000;transform:scaleX(0.9512);transform-origin:0 0;">lsid</div>
<div class="t s" style="left:1545.0px;top:419.1px;font-size:41px;line-height:41px;color:#000;transform:scaleX(1.0525);transform-origin:0 0;">op</div>
<div class="t s" style="left:1826.0px;top:419.1px;font-size:41px;line-height:41px;color:#000;transform:scaleX(0.9409);transform-origin:0 0;">desc</div>
<div class="t s" style="left:2105.0px;top:419.1px;font-size:41px;line-height:41px;color:#000;transform:scaleX(0.9078);transform-origin:0 0;">secs_run...</div>
<div class="t s" style="left:2386.0px;top:419.1px;font-size:41px;line-height:41px;color:#000;transform:scaleX(0.9016);transform-origin:0 0;">ns</div>
<div class="t s" style="left:2665.0px;top:419.1px;font-size:41px;line-height:41px;color:#000;transform:scaleX(1.0167);transform-origin:0 0;">command</div>
<div class="t s" style="left:2948.0px;top:419.1px;font-size:41px;line-height:41px;color:#000;transform:scaleX(1.0132);transform-origin:0 0;">client</div>
<div class="t s" style="left:3228.0px;top:419.1px;font-size:41px;line-height:41px;color:#000;transform:scaleX(0.9808);transform-origin:0 0;">msg</div>
<div class="t s" style="left:3512.0px;top:419.1px;font-size:41px;line-height:41px;color:#000;transform:scaleX(1.0049);transform-origin:0 0;">appName</div>
<svg style="position:absolute;left:2315px;top:431px;" width="32" height="18" viewBox="0 0 32 18"><path d="M0 0 H32 L16 18 Z" fill="#6e6e6e"/></svg>
<div style="left:955px;top:479px;width:2806px;height:4px;background:#d6d6d6;"></div>
<div style="left:955px;top:483px;width:2806px;height:335px;background:#f2f2f2;"></div>
<div style="left:955px;top:483px;width:2806px;height:79.5px;background:#ffffff;"></div>
<div style="left:955px;top:567px;width:2806px;height:79.25px;background:#ffffff;"></div>
<div style="left:955px;top:650.75px;width:2806px;height:79.25px;background:#ffffff;"></div>
<div style="left:955px;top:735px;width:2806px;height:79.25px;background:#ffffff;"></div>
<div style="left:1232px;top:483px;width:3px;height:335px;background:#f2f2f2;"></div>
<div style="left:1512px;top:483px;width:3px;height:335px;background:#f2f2f2;"></div>
<div style="left:1793px;top:483px;width:3px;height:335px;background:#f2f2f2;"></div>
<div style="left:2073px;top:483px;width:3px;height:335px;background:#f2f2f2;"></div>
<div style="left:2353px;top:483px;width:3px;height:335px;background:#f2f2f2;"></div>
<div style="left:2633px;top:483px;width:3px;height:335px;background:#f2f2f2;"></div>
<div style="left:2916px;top:483px;width:3px;height:335px;background:#f2f2f2;"></div>
<div style="left:3195px;top:483px;width:3px;height:335px;background:#f2f2f2;"></div>
<div style="left:3479px;top:483px;width:3px;height:335px;background:#f2f2f2;"></div>
<div style="left:955px;top:567px;width:278px;height:79.25px;background:#d5d5d5;"></div>
<div style="left:1236px;top:567px;width:276px;height:79.25px;background:#d5d5d5;"></div>
<div style="left:1515px;top:567px;width:278px;height:79.25px;background:#2675bf;"></div>
<div style="left:1796px;top:567px;width:277px;height:79.25px;background:#2675bf;"></div>
<div style="left:2076px;top:567px;width:277px;height:79.25px;background:#2675bf;"></div>
<div style="left:2356px;top:567px;width:277px;height:79.25px;background:#2675bf;"></div>
<div style="left:2636px;top:567px;width:280px;height:79.25px;background:#2675bf;"></div>
<div style="left:2919px;top:567px;width:276px;height:79.25px;background:#2675bf;"></div>
<div style="left:3198px;top:567px;width:281px;height:79.25px;background:#2675bf;"></div>
<div style="left:3482px;top:567px;width:275px;height:79.25px;background:#2675bf;"></div>
<div class="t s" style="left:979.0px;top:507.6px;font-size:41px;line-height:41px;color:#000;transform:scaleX(0.9784);transform-origin:0 0;">32283441</div>
<div class="t s" style="left:1527.5px;top:504.1px;font-size:41px;line-height:41px;color:#000;transform:scaleX(1.0112);transform-origin:0 0;">command</div>
<div style="left:1797px;top:479px;width:276px;height:80px;overflow:hidden">
<div class="t s" style="left:10.5px;top:25.1px;font-size:41px;line-height:41px;color:#000;transform:scaleX(0.9946);transform-origin:0 0;">conn13</div>
</div>
<div class="t s" style="left:2314.6px;top:504.1px;font-size:41px;line-height:41px;color:#000;">2</div>
<div style="left:2357px;top:479px;width:276px;height:80px;overflow:hidden">
<div class="t s" style="left:10.0px;top:25.1px;font-size:41px;line-height:41px;color:#000;transform:scaleX(1.0034);transform-origin:0 0;">admin.$cmd</div>
</div>
<div style="left:2637px;top:479px;width:279px;height:80px;overflow:hidden">
<div class="t s" style="left:10.0px;top:25.1px;font-size:41px;line-height:41px;color:#000;">{&quot;hello&quot;: 1, &quot;...</div>
</div>
<div class="t s" style="left:2933.0px;top:504.1px;font-size:41px;line-height:41px;color:#000;transform:scaleX(0.9180);transform-origin:0 0;">127.0.0.1:6...</div>
<div class="t s" style="left:3495.0px;top:504.1px;font-size:41px;line-height:41px;color:#000;transform:scaleX(0.9441);transform-origin:0 0;">NoSQL Navi...</div>
<div class="t s" style="left:979.0px;top:591.1px;font-size:41px;line-height:41px;color:#000;transform:scaleX(0.9784);transform-origin:0 0;">32283474</div>
<div class="t s" style="left:1527.5px;top:587.6px;font-size:41px;line-height:41px;color:#fff;transform:scaleX(1.0085);transform-origin:0 0;">none</div>
<div style="left:1797px;top:562.5px;width:276px;height:80px;overflow:hidden">
<div class="t s" style="left:10.5px;top:25.1px;font-size:41px;line-height:41px;color:#fff;">JournalFlusher</div>
</div>
<div style="left:2637px;top:562.5px;width:279px;height:80px;overflow:hidden">
<div class="t s" style="left:10.0px;top:25.1px;font-size:41px;line-height:41px;color:#fff;">{}</div>
</div>
<div class="t s" style="left:979.0px;top:674.9px;font-size:41px;line-height:41px;color:#000;transform:scaleX(0.9784);transform-origin:0 0;">32283475</div>
<div style="left:1236px;top:646.25px;width:276px;height:80px;overflow:hidden">
<div class="t s" style="left:22.0px;top:25.1px;font-size:41px;line-height:41px;color:#000;">6b414bab-b14</div>
</div>
<div class="t s" style="left:1527.5px;top:671.4px;font-size:41px;line-height:41px;color:#000;transform:scaleX(1.0112);transform-origin:0 0;">command</div>
<div style="left:1797px;top:646.25px;width:276px;height:80px;overflow:hidden">
<div class="t s" style="left:10.5px;top:25.1px;font-size:41px;line-height:41px;color:#000;transform:scaleX(0.9946);transform-origin:0 0;">conn15</div>
</div>
<div style="left:2357px;top:646.25px;width:276px;height:80px;overflow:hidden">
<div class="t s" style="left:10.0px;top:25.1px;font-size:41px;line-height:41px;color:#000;">admin.$cmd...</div>
</div>
<div style="left:2637px;top:646.25px;width:279px;height:80px;overflow:hidden">
<div class="t s" style="left:10.0px;top:25.1px;font-size:41px;line-height:41px;color:#000;">{&quot;currentOp...</div>
</div>
<div class="t s" style="left:2933.0px;top:671.4px;font-size:41px;line-height:41px;color:#000;transform:scaleX(0.9180);transform-origin:0 0;">127.0.0.1:6...</div>
<div class="t s" style="left:3495.0px;top:671.4px;font-size:41px;line-height:41px;color:#000;transform:scaleX(0.9441);transform-origin:0 0;">NoSQL Navi...</div>
<div class="t s" style="left:979.0px;top:758.6px;font-size:41px;line-height:41px;color:#000;transform:scaleX(0.9784);transform-origin:0 0;">32283374</div>
<div class="t s" style="left:1527.5px;top:755.1px;font-size:41px;line-height:41px;color:#000;transform:scaleX(1.0085);transform-origin:0 0;">none</div>
<div style="left:1797px;top:730px;width:276px;height:80px;overflow:hidden">
<div class="t s" style="left:10.5px;top:25.1px;font-size:41px;line-height:41px;color:#000;">Checkpointer</div>
</div>
<div style="left:2637px;top:730px;width:279px;height:80px;overflow:hidden">
<div class="t s" style="left:10.0px;top:25.1px;font-size:41px;line-height:41px;color:#000;">{}</div>
</div>
<div style="left:1002px;top:1043px;width:49px;height:49px;background:#fff;border:3px solid #b1b1b1;border-radius:8px"></div>
<div class="t s" style="left:1071.8px;top:1050.2px;font-size:41px;line-height:41px;color:#000;transform:scaleX(1.0225);transform-origin:0 0;">Auto-refresh every</div>
<div style="left:1463px;top:1029px;width:287px;height:84px;background:#fff;border:3px solid #c4c4c4;border-radius:10px"></div>
<div style="left:1672px;top:1032px;width:3px;height:78px;background:#c4c4c4;"></div>
<div style="left:1675px;top:1032px;width:72px;height:78px;background:#fafafa;border-radius:0 8px 8px 0"></div>
<svg style="position:absolute;left:1694px;top:1050px;" width="32" height="45" viewBox="0 0 32 45"><path d="M0 18 L16 0 L32 18 Z M0 27 H32 L16 45 Z" fill="#6e6e6e"/></svg>
<div class="t s" style="left:1480px;top:1053.2px;width:167px;text-align:right;font-size:41px;line-height:41px">10</div>
<div class="t s" style="left:1796.7px;top:1053.2px;font-size:41px;line-height:41px;color:#000;transform:scaleX(0.8854);transform-origin:0 0;">secs</div>
<div style="left:1921px;top:1043px;width:49px;height:49px;background:#fff;border:3px solid #b1b1b1;border-radius:8px"></div>
<div class="t s" style="left:1989.0px;top:1050.2px;font-size:41px;line-height:41px;color:#000;transform:scaleX(1.0043);transform-origin:0 0;">Show All Ops</div>
<div style="left:2283px;top:1043px;width:49px;height:49px;background:#4c9ae0;border-radius:8px"></div>
<svg style="position:absolute;left:2283px;top:1043px;" width="49" height="49" viewBox="0 0 49 49"><path d="M11 25 L20 35 L38 12" fill="none" stroke="#fff" stroke-width="6"/></svg>
<div class="t s" style="left:2353.0px;top:1050.2px;font-size:41px;line-height:41px;color:#000;transform:scaleX(0.9953);transform-origin:0 0;">Show Own Ops</div>
<div style="left:962px;top:1188px;width:18px;height:3px;background:#a4a4a4;"></div>
<div style="left:965px;top:1191px;width:15px;height:4px;background:#ffffff;"></div>
<div style="left:1333px;top:1188px;width:2417px;height:3px;background:#a4a4a4;"></div>
<div style="left:1333px;top:1191px;width:2414px;height:4px;background:#ffffff;"></div>
<div style="left:962px;top:1188px;width:3px;height:808px;background:#a4a4a4;"></div>
<div style="left:965px;top:1191px;width:3px;height:802px;background:#ffffff;"></div>
<div style="left:962px;top:1993px;width:2788px;height:3px;background:#a4a4a4;"></div>
<div style="left:962px;top:1996px;width:2792px;height:4px;background:#ffffff;"></div>
<div style="left:3746px;top:1188px;width:4px;height:808px;background:#a4a4a4;"></div>
<div style="left:3750px;top:1188px;width:4px;height:812px;background:#ffffff;"></div>
<div class="t s" style="left:1001.0px;top:1175.7px;font-size:41px;line-height:41px;color:#000;transform:scaleX(1.0119);transform-origin:0 0;">Operation Details</div>
<svg style="position:absolute;left:1008px;top:1257px;" width="46" height="49" viewBox="0 0 46 49"><rect x="0" y="0" width="42" height="6" fill="#6e6e6e"/><rect x="0" y="14" width="26" height="6" fill="#6e6e6e" transform="translate(0,0)"/><rect x="0" y="37" width="10" height="6" fill="#6e6e6e"/><rect x="14" y="37" width="6" height="6" fill="#6e6e6e"/><path d="M26 17 H34 A9 9 0 0 1 34 40 H24" fill="none" stroke="#6e6e6e" stroke-width="6"/><path d="M28 30 L16 40 L28 49 Z" fill="#6e6e6e"/></svg>
<div style="left:976px;top:1326px;width:2767px;height:662px;background:#ffffff;"></div>
<div style="left:976px;top:1403px;width:2767px;height:77px;background:#fcfaed;"></div>
<div style="left:3707px;top:1536px;width:34px;height:298px;background:#e6e6e6;border:1px solid #d8d8d8"></div>
<div style="left:976px;top:1326px;width:2767px;height:662px;overflow:hidden">
<div class="t m" style="left:55px;top:22.3px;font-size:46.6px;line-height:46.6px"><span style="color:#871094">&quot;opid&quot;</span><span style="color:#000">: 32283474,</span></div>
<div class="t m" style="left:55px;top:99.2px;font-size:46.6px;line-height:46.6px"><span style="color:#871094">&quot;op&quot;</span><span style="color:#000">: &quot;none&quot;,</span></div>
<div class="t m" style="left:55px;top:176.1px;font-size:46.6px;line-height:46.6px"><span style="color:#871094">&quot;ns&quot;</span><span style="color:#000">: &quot;&quot;,</span></div>
<div class="t m" style="left:55px;top:253.0px;font-size:46.6px;line-height:46.6px"><span style="color:#871094">&quot;command&quot;</span><span style="color:#000">: {},</span></div>
<div class="t m" style="left:55px;top:329.9px;font-size:46.6px;line-height:46.6px"><span style="color:#871094">&quot;numYields&quot;</span><span style="color:#000">: 0,</span></div>
<div class="t m" style="left:55px;top:406.8px;font-size:46.6px;line-height:46.6px"><span style="color:#871094">&quot;locks&quot;</span><span style="color:#000">: {},</span></div>
<div class="t m" style="left:55px;top:483.7px;font-size:46.6px;line-height:46.6px"><span style="color:#871094">&quot;waitingForLock&quot;</span><span style="color:#000">: false,</span></div>
<div class="t m" style="left:55px;top:560.6px;font-size:46.6px;line-height:46.6px"><span style="color:#871094">&quot;lockStats&quot;</span><span style="color:#000">: {},</span></div>
<div class="t m" style="left:55px;top:637.5px;font-size:46.6px;line-height:46.6px"><span style="color:#871094">&quot;waitingForFlowControl&quot;</span><span style="color:#000">: false</span></div>
</div>
<svg style="position:absolute;left:1060px;top:1391px;" width="112" height="8" viewBox="0 0 112 8"><path d="M0 7 L4 1 L8 7 L12 1 L16 7 L20 1 L24 7 L28 1 L32 7 L36 1 L40 7 L44 1 L48 7 L52 1 L56 7 L60 1 L64 7 L68 1 L72 7 L76 1 L80 7 L84 1 L88 7 L92 1 L96 7 L100 1 L104 7 L108 1 L112 7" fill="none" stroke="#a9d3a2" stroke-width="2"/></svg>
<svg style="position:absolute;left:1008px;top:1351px;" width="36" height="50" viewBox="0 0 36 50"><path d="M18 0 A17 17 0 0 1 35 17 Q35 26 27 33 V36 H9 V33 Q1 26 1 17 A17 17 0 0 1 18 0 Z" fill="#f0a30a"/><rect x="8" y="39" width="20" height="4" fill="#6e6e6e"/><rect x="10" y="45" width="16" height="4" fill="#6e6e6e"/></svg>
<div style="left:3761px;top:203px;width:5px;height:1806px;background:#d6d6d6;"></div>
<div style="left:3766px;top:203px;width:74px;height:1806px;background:#f2f2f2;"></div>
<svg style="position:absolute;left:3770px;top:230px;" width="70" height="70" viewBox="0 0 1449 1449"><path d="M210 300 Q210 230 280 230 H710 Q785 230 785 300 V810 H710 V375 H280 V885 H490 V950 L430 1105 H280 Q210 1105 210 1030 Z" fill="#6e6e6e"/><path d="M495 1175 A290 280 0 0 1 1075 1175 Z" fill="#6e6e6e"/><path d="M605 790 L665 920 M965 790 L905 920" stroke="#6e6e6e" stroke-width="60"/></svg>
<div class="t s" style="left:3816.6px;top:302.0px;font-size:38px;line-height:38px;color:#000;transform-origin:0 0;transform:rotate(90deg) scaleX(0.9785)">Device Manager</div>
<svg style="position:absolute;left:3770px;top:640px;" width="70" height="70" viewBox="0 0 1449 1449"><path d="M280 945 Q300 850 360 790 Q380 560 420 470 Q500 300 720 310 Q700 370 710 430 Q760 650 990 665 Q1000 760 1020 800 Q1070 870 1075 945 Z" fill="#6e6e6e"/><path d="M545 1020 H805 A130 150 0 0 1 545 1020 Z" fill="#6e6e6e"/><circle cx="965" cy="405" r="180" fill="#389fd6"/></svg>
<div class="t s" style="left:3816.6px;top:710.8px;font-size:38px;line-height:38px;color:#000;transform-origin:0 0;transform:rotate(90deg) scaleX(1.0140)">Notifications</div>
<svg style="position:absolute;left:3700px;top:960px;" width="140" height="140" viewBox="0 0 1449 1449"><path d="M830 775 C820 640 860 570 915 545 L920 520 C1000 480 1110 490 1180 530 C1230 550 1255 520 1250 490 C1245 455 1205 445 1180 465 L1170 450 C1220 415 1300 440 1300 520 C1300 600 1230 640 1190 690 C1170 720 1165 750 1165 775 L1115 775 C1110 745 1090 730 1070 730 C1050 730 1030 745 1025 775 L970 775 C965 745 945 730 925 730 C905 730 885 745 880 775 Z" fill="#6e6e6e"/><path d="M912 555 Q940 610 970 625 Q1000 615 1045 578" fill="none" stroke="#f2f2f2" stroke-width="16"/><circle cx="1142" cy="577" r="13" fill="#f2f2f2"/></svg>
<div class="t s" style="left:3816.6px;top:1057.5px;font-size:38px;line-height:38px;color:#000;transform-origin:0 0;transform:rotate(90deg) scaleX(0.9175)">Gradle</div>
<svg style="position:absolute;left:3788px;top:1238px;" width="32" height="47" viewBox="0 0 32 47"><rect x="2.5" y="2.5" width="27" height="42" rx="4" fill="none" stroke="#6e6e6e" stroke-width="5"/><rect x="2" y="34" width="28" height="10" fill="#6e6e6e"/><rect x="11" y="37" width="10" height="3" fill="#f2f2f2"/></svg>
<div class="t s" style="left:3816.6px;top:1302.0px;font-size:38px;line-height:38px;color:#000;transform-origin:0 0;transform:rotate(90deg) scaleX(0.9468)">Device Explorer</div>
<svg style="position:absolute;left:3788px;top:1640px;" width="36" height="47" viewBox="0 0 36 47"><path d="M4 38 V8 a5 5 0 0 1 5 -5 H22 V12" fill="none" stroke="#6e6e6e" stroke-width="6"/><rect x="0" y="32" width="14" height="8" fill="#6e6e6e"/><rect x="16" y="26" width="18" height="14" fill="none" stroke="#6e6e6e" stroke-width="3"/><rect x="16" y="43" width="20" height="3" fill="#6e6e6e"/></svg>
<div class="t s" style="left:3816.6px;top:1699.7px;font-size:38px;line-height:38px;color:#000;transform-origin:0 0;transform:rotate(90deg) scaleX(0.9708)">Running Devices</div>
<div style="left:0px;top:2009px;width:3840px;height:4px;background:#d0d0d0;"></div>
<div style="left:0px;top:2013px;width:3840px;height:73px;background:#f2f2f2;"></div>
<div style="left:0px;top:2086px;width:3840px;height:4px;background:#d6d6d6;"></div>
<div style="left:0px;top:2090px;width:3840px;height:70px;background:#f2f2f2;"></div>
<div class="t s" style="left:175.2px;top:2035.7px;font-size:41px;line-height:41px;color:#000;transform:scaleX(0.9242);transform-origin:0 0;">Version Control</div>
<div class="t s" style="left:579.5px;top:2035.7px;font-size:41px;line-height:41px;color:#000;transform:scaleX(0.9041);transform-origin:0 0;">Profiler</div>
<div class="t s" style="left:824.4px;top:2035.7px;font-size:41px;line-height:41px;color:#000;transform:scaleX(0.8863);transform-origin:0 0;">Logcat</div>
<div class="t s" style="left:1071.8px;top:2035.7px;font-size:41px;line-height:41px;color:#000;transform:scaleX(0.9197);transform-origin:0 0;">App Quality Insights</div>
<div class="t s" style="left:1551.4px;top:2035.7px;font-size:41px;line-height:41px;color:#000;transform:scaleX(0.8787);transform-origin:0 0;">TODO</div>
<div class="t s" style="left:1786.2px;top:2035.7px;font-size:41px;line-height:41px;color:#000;transform:scaleX(0.8838);transform-origin:0 0;">Problems</div>
<div class="t s" style="left:2072.4px;top:2035.7px;font-size:41px;line-height:41px;color:#000;transform:scaleX(0.9195);transform-origin:0 0;">Terminal</div>
<div class="t s" style="left:2349.0px;top:2035.7px;font-size:41px;line-height:41px;color:#000;transform:scaleX(0.8471);transform-origin:0 0;">Services</div>
<div class="t s" style="left:2615.2px;top:2035.7px;font-size:41px;line-height:41px;color:#000;transform:scaleX(0.9273);transform-origin:0 0;">App Inspection</div>
<div class="t s" style="left:3444.2px;top:2035.7px;font-size:41px;line-height:41px;color:#000;transform:scaleX(0.9162);transform-origin:0 0;">Layout Inspector</div>
<svg style="position:absolute;left:123px;top:2033px;" width="30" height="40" viewBox="0 0 30 40"><circle cx="5" cy="5" r="5" fill="#6e6e6e"/><circle cx="5" cy="35" r="5" fill="#6e6e6e"/><circle cx="25" cy="12" r="5" fill="#6e6e6e"/><path d="M5 5 V35 M5 28 Q25 26 25 12" fill="none" stroke="#6e6e6e" stroke-width="4"/></svg>
<svg style="position:absolute;left:518px;top:2040px;" width="46" height="28" viewBox="0 0 46 28"><path d="M4 28 A19 19 0 0 1 42 28" fill="none" stroke="#6e6e6e" stroke-width="7"/><path d="M18 6 L26 26 L20 28 Z" fill="#6e6e6e"/></svg>
<svg style="position:absolute;left:766px;top:2040px;" width="40" height="28" viewBox="0 0 40 28"><rect x="0" y="0" width="40" height="6" fill="#6e6e6e"/><rect x="0" y="11" width="20" height="6" fill="#6e6e6e"/><rect x="0" y="22" width="32" height="6" fill="#6e6e6e"/></svg>
<svg style="position:absolute;left:1011px;top:2033px;" width="46" height="42" viewBox="0 0 46 42"><path d="M10 2 H36 L45 14 L23 41 L1 14 Z M1 14 H45 M14 2 L10 14 L23 41 L36 14 L32 2 M17 14 L23 2 L29 14" fill="none" stroke="#6e6e6e" stroke-width="3"/></svg>
<svg style="position:absolute;left:1498px;top:2036px;" width="36" height="32" viewBox="0 0 36 32"><rect x="0" y="0" width="6" height="6" fill="#6e6e6e"/><rect x="10" y="0" width="26" height="6" fill="#6e6e6e"/><rect x="0" y="13" width="6" height="6" fill="#6e6e6e"/><rect x="10" y="13" width="26" height="6" fill="#6e6e6e"/><rect x="0" y="26" width="6" height="6" fill="#6e6e6e"/><rect x="10" y="26" width="26" height="6" fill="#6e6e6e"/></svg>
<svg style="position:absolute;left:1730px;top:2033px;" width="37" height="37" viewBox="0 0 37 37"><circle cx="18.5" cy="18.5" r="18.5" fill="#6e6e6e"/><rect x="15" y="7" width="7" height="15" fill="#f2f2f2"/><rect x="15" y="25" width="7" height="6" fill="#f2f2f2"/></svg>
<svg style="position:absolute;left:2015px;top:2033px;" width="40" height="36" viewBox="0 0 40 36"><rect x="0" y="0" width="40" height="36" fill="#6e6e6e"/><path d="M7 9 L16 16 L7 23" fill="none" stroke="#f2f2f2" stroke-width="3"/><rect x="19" y="25" width="12" height="3" fill="#f2f2f2"/></svg>
<svg style="position:absolute;left:2289px;top:2033px;" width="45" height="42" viewBox="0 0 45 42"><path d="M12 1 H33 L44 21 L33 41 H12 L1 21 Z" fill="#6e6e6e"/><path d="M17 11 L31 21 L17 31 Z" fill="#f2f2f2"/></svg>
<svg style="position:absolute;left:2558px;top:2033px;" width="39" height="42" viewBox="0 0 39 42"><path d="M8 4 Q8 0 14 0 H25 Q31 0 31 4 V12 H39 V17 H31 V26 H39 V31 H31 V38 L25 42 H14 L8 38 V31 H0 V26 H8 V17 H0 V12 H8 Z" fill="#6e6e6e"/></svg>
<svg style="position:absolute;left:3384px;top:2030px;" width="45" height="45" viewBox="0 0 45 45"><path d="M2 30 V2 H30 M8 34 V8 H34" fill="none" stroke="#6e6e6e" stroke-width="3"/><circle cx="28" cy="28" r="8" fill="none" stroke="#6e6e6e" stroke-width="4"/><path d="M33 33 L44 44" stroke="#6e6e6e" stroke-width="5"/></svg>
<svg style="position:absolute;left:20px;top:2104px;" width="44" height="42" viewBox="0 0 44 42"><rect x="9" y="2" width="33" height="30" fill="none" stroke="#6e6e6e" stroke-width="3"/><path d="M2 10 V40 H34" fill="none" stroke="#6e6e6e" stroke-width="3"/></svg>
<div style="left:0px;top:2090px;width:3642px;height:69px;overflow:hidden">
<div class="t s" style="left:97.0px;top:14.6px;font-size:41px;line-height:41px;transform:scaleX(1.0194);transform-origin:0 0">Project update recommended: Android Gradle plugin version 8.0.2 has an upgrade available.  Start the AGP Upgrade Assistant to update this project&#x27;s AGP version. // Start AG... (10 minutes ago)</div>
</div>
<svg style="position:absolute;left:3755px;top:2103px;" width="44" height="40" viewBox="0 0 44 40"><rect x="1" y="1" width="42" height="32" rx="4" fill="#6e6e6e"/><path d="M24 30 H43 V39 Z" fill="#6e6e6e"/><rect x="18.5" y="4" width="6" height="15" fill="#f2f2f2"/><rect x="18.5" y="23" width="6" height="6" fill="#f2f2f2"/></svg>
<div style="left:2012px;top:574px;width:479px;height:367px;background:#f2f2f2;border:3px solid #d2d2d2"></div>
<div style="left:2015px;top:595px;width:473px;height:73px;background:#2675bf;"></div>
<svg style="position:absolute;left:2061px;top:609px;" width="42" height="42" viewBox="0 0 42 42"><g transform="scale(0.9767441860465116)"><path d="M9.14 8.14 A17.9 17.9 0 0 1 39.5 18.3" fill="none" stroke="#b4b4b4" stroke-width="5.6"/><path d="M4.07 23.3 A17.9 17.9 0 0 0 34.46 33.46" fill="none" stroke="#b4b4b4" stroke-width="5.6"/><path d="M1.1 1.2 V17.8 H18.3 Z" fill="#b4b4b4"/><path d="M43 23.9 V41 L26.3 23.9 Z" fill="#b4b4b4"/></g></svg>
<div class="t s" style="left:2129.8px;top:612.1px;font-size:41px;line-height:41px;color:#fff;transform:scaleX(0.9484);transform-origin:0 0;">Refresh</div>
<div style="left:2050px;top:682px;width:403px;height:4px;background:#d6d6d6;"></div>
<svg style="position:absolute;left:2065px;top:717px;" width="35" height="35" viewBox="0 0 35 35"><defs><linearGradient id="rg2065" x1="0" y1="0" x2="0" y2="1"><stop offset="0" stop-color="#ff7a00"/><stop offset="1" stop-color="#e80000"/></linearGradient></defs><rect x="1.5" y="1.5" width="32" height="32" fill="url(#rg2065)" stroke="#5a0000" stroke-width="3"/></svg>
<div class="t s" style="left:2129.8px;top:717.1px;font-size:41px;line-height:41px;color:#000;transform:scaleX(1.0174);transform-origin:0 0;">Kill Operation</div>
<svg style="position:absolute;left:2045px;top:770px;" width="80" height="150" viewBox="0 0 773 1449"><path d="M170 270 Q140 170 230 150 Q290 145 320 200 L625 590 L625 645 L560 645 L180 310 Z" fill="#c4c4c4" stroke="#b4b4b4" stroke-width="14"/><path d="M100 500 L510 145 L595 145 L595 195 L230 600 Q175 665 110 625 Q60 570 100 500 Z" fill="#c4c4c4" stroke="#b4b4b4" stroke-width="14"/></svg>
<div class="t s" style="left:2129.8px;top:790.1px;font-size:41px;line-height:41px;color:#9a9a9a;transform:scaleX(0.9530);transform-origin:0 0;">Kill Session</div>
<svg style="position:absolute;left:2045px;top:770px;" width="80" height="150" viewBox="0 0 773 1449"><defs><linearGradient id="rx" x1="0" y1="0" x2="0" y2="1"><stop offset="0" stop-color="#ff9a8a"/><stop offset="1" stop-color="#f00000"/></linearGradient></defs><path d="M225 850 H465 V815 L595 895 L465 975 V940 H225 Z" fill="#0a3d91"/><rect x="255" y="880" width="35" height="35" fill="#e6f25a"/><rect x="325" y="880" width="35" height="35" fill="#e6f25a"/><path d="M395 880 H490 V850 L555 897 L490 945 V915 H395 Z" fill="#eaf590"/><path d="M225 990 H465 V955 L595 1035 L465 1115 V1080 H225 Z" fill="#0a3d91"/><rect x="255" y="1020" width="35" height="35" fill="#e6f25a"/><rect x="325" y="1020" width="35" height="35" fill="#e6f25a"/><path d="M395 1020 H490 V990 L555 1037 L490 1085 V1055 H395 Z" fill="#eaf590"/><path d="M225 1130 H465 V1095 L595 1175 L465 1255 V1220 H225 Z" fill="#0a3d91"/><rect x="255" y="1160" width="35" height="35" fill="#e6f25a"/><rect x="325" y="1160" width="35" height="35" fill="#e6f25a"/><path d="M395 1160 H490 V1130 L555 1177 L490 1225 V1195 H395 Z" fill="#eaf590"/><path d="M140 1060 Q130 990 200 985 Q250 985 280 1030 L520 1345 L430 1345 L160 1110 Z" fill="url(#rx)" stroke="#a00000" stroke-width="16"/><path d="M100 1250 L430 990 L515 990 L200 1320 Q150 1370 100 1330 Q70 1290 100 1250 Z" fill="url(#rx)" stroke="#a00000" stroke-width="16"/></svg>
<div class="t s" style="left:2129.8px;top:864.6px;font-size:41px;line-height:41px;color:#000;transform:scaleX(0.9697);transform-origin:0 0;">Kill All Sessions</div>
<div style="left:3838px;top:0px;width:1px;height:2159px;background:#ffffff;"></div>
<div style="left:3839px;top:0px;width:1px;height:2160px;background:#2b3134;"></div>
<div style="left:0px;top:2158px;width:3839px;height:1px;background:#ffffff;"></div>
<div style="left:0px;top:2159px;width:3840px;height:1px;background:#2b3134;"></div>
</body></html>
